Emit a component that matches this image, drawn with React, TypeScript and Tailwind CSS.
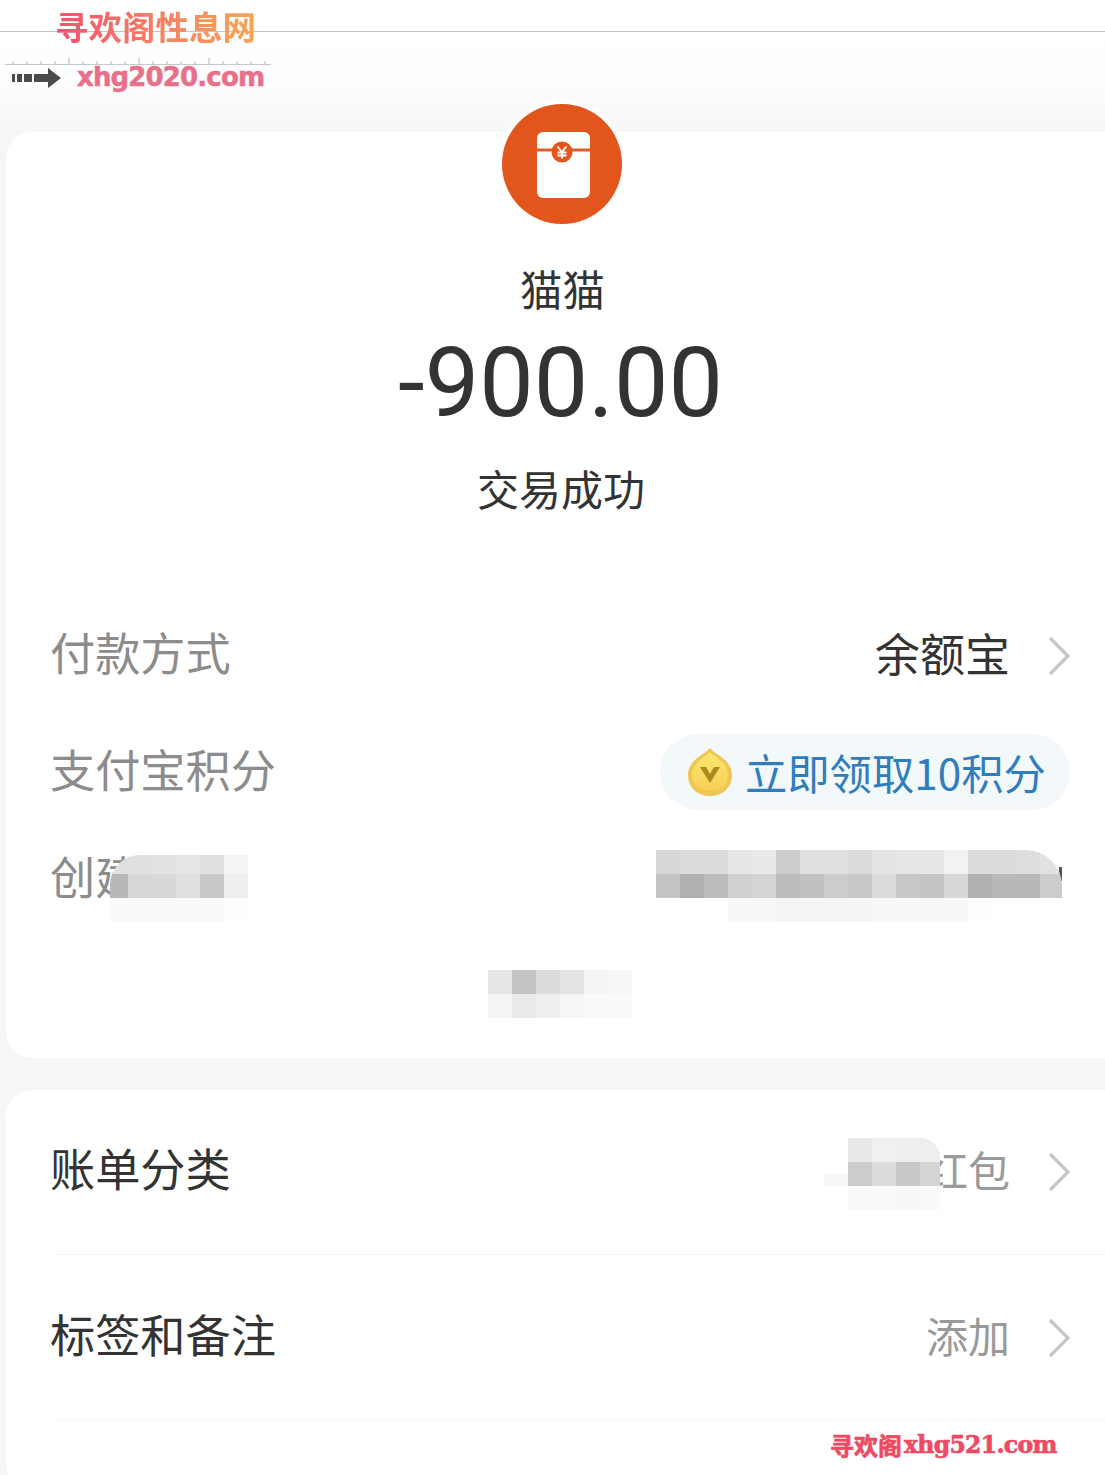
import React from "react";

const cjk = "font-['Noto_Sans_CJK_SC','Noto_Sans',sans-serif]";

function Chevron({ className = "" }: { className?: string }) {
  return (
    <svg width="24" height="42" viewBox="0 0 24 42" className={"shrink-0 " + className} fill="none">
      <path d="M3 3 L21 21 L3 39" stroke="#c6c6c6" strokeWidth="3.2" />
    </svg>
  );
}

function Mosaic({ rows, className }: { rows: string[][]; className: string }) {
  return (
    <div className={"absolute flex flex-col overflow-hidden " + className}>
      {rows.map((r, i) => (
        <div key={i} className="flex h-6 shrink-0">
          {r.map((c, j) => (
            <div key={j} className="h-6 w-6 shrink-0" style={{ backgroundColor: c }} />
          ))}
        </div>
      ))}
    </div>
  );
}

function Packet() {
  return (
    <svg width="120" height="120" viewBox="0 0 120 120" className="block">
      <circle cx="60" cy="60" r="60" fill="#e2551c" />
      <rect x="35" y="28" width="53" height="66" rx="6" fill="#fff" />
      <path d="M35 46 H88" stroke="#d9602c" strokeWidth="3" />
      <circle cx="60" cy="48" r="10.5" fill="#e2551c" />
      <path d="M55.5 42.5 L60 48 L64.5 42.5 M60 48 V54.5 M55.5 48.5 H64.5 M55.5 51.5 H64.5" stroke="#fff" strokeWidth="1.9" fill="none" />
    </svg>
  );
}

function Coin() {
  return (
    <svg width="46" height="50" viewBox="0 0 46 50" className="shrink-0">
      <defs>
        <linearGradient id="coin" x1="0" y1="0" x2="0" y2="1">
          <stop offset="0" stopColor="#fbe86f" />
          <stop offset="1" stopColor="#f8cf55" />
        </linearGradient>
      </defs>
      <path d="M23 1 C27 7 45 12 45 28 C45 41 35 49 23 49 C11 49 1 41 1 28 C1 12 19 7 23 1 Z" fill="#efc653" />
      <path d="M23 5 C27 10 41 15 41 28 C41 38 33 44 23 44 C13 44 5 38 5 28 C5 15 19 10 23 5 Z" fill="url(#coin)" />
      <path d="M13 20 L23 36 L33 20 L27 20 L23 27 L19 20 Z" fill="#a98a1e" />
    </svg>
  );
}

function Ruler() {
  const ticks = Array.from({ length: 19 }, (_, i) => i);
  return (
    <svg width="266" height="8" viewBox="0 0 266 8" className="block">
      <path d="M0 7.5 H266" stroke="#c9c9c9" strokeWidth="1" />
      {ticks.map((i) => (
        <path key={i} d={`M${8 + i * 14} ${i % 5 === 4 ? 1 : 4} V7`} stroke="#b5b5b5" strokeWidth="1" />
      ))}
    </svg>
  );
}

function Arrow() {
  return (
    <svg width="50" height="22" viewBox="0 0 50 22" className="block">
      <path d="M0 7 H3 V15 H0 Z M5 7 H10 V15 H5 Z M12 7 H20 V15 H12 Z M22 7 H36 V1 L49 11 L36 21 V15 H22 Z" fill="#4a4a4a" />
    </svg>
  );
}

function Row({
  label,
  value,
  className,
  labelShift,
  valueShift,
  chevronShift,
}: {
  label: string;
  value: string;
  className: string;
  labelShift: string;
  valueShift: string;
  chevronShift: string;
}) {
  return (
    <div className={"flex items-center justify-between pl-[44px] pr-[65px] " + className}>
      <span className={"text-[45.2px] leading-none text-[#333] " + labelShift}>{label}</span>
      <div className="flex items-center gap-[37px]">
        <span className={"text-[42px] leading-none text-[#9a9a9a] " + valueShift}>{value}</span>
        <Chevron className={chevronShift} />
      </div>
    </div>
  );
}

export default function App() {
  return (
    <div className={"relative h-[1475px] w-[1105px] overflow-hidden bg-[#f6f6f6] " + cjk}>
      <div className="h-[32px] border-b border-[#c4c4c4] bg-white" />
      <div className="h-[100px] bg-gradient-to-b from-white via-[#fdfdfd] to-[#f7f7f7]" />

      <main className="ml-[6px] w-[1130px]">
        {/* summary card */}
        <section className="relative flex h-[926px] flex-col rounded-[26px] bg-white">
          <div className="-mt-[28px] ml-[496px] w-[120px] rounded-full ring-4 ring-white/70">
            <Packet />
          </div>
          <div className="mt-[40px] ml-[514px] text-[42.5px] leading-[48px] text-[#333]">猫猫</div>
          <div className="mt-[13px] ml-[392px] font-['Roboto',sans-serif] text-[97px] leading-[116px] text-[#333]">-900.00</div>
          <div className="mt-[23px] ml-[471px] text-[42px] leading-[48px] text-[#333]">交易成功</div>

          <div className="mt-[110px]">
            <div className="flex h-[60px] items-center justify-between pl-[44px] pr-[65px]">
              <span className="text-[45.2px] leading-none text-[#8c8c8c]">付款方式</span>
              <div className="flex items-center gap-[37px]">
                <span className="text-[45px] leading-none text-[#333]">余额宝</span>
                <Chevron className="mt-[8px]" />
              </div>
            </div>
            <div className="mt-[52px] flex h-[76px] items-center justify-between pl-[44px] pr-[66px]">
              <span className="-mt-[6px] text-[45.2px] leading-none text-[#8c8c8c]">支付宝积分</span>
              <div className="flex h-[76px] w-[410px] items-center rounded-full bg-[#f3f8fb] pl-[27px]">
                <Coin />
                <span className="ml-[12px] text-[42.3px] leading-none whitespace-nowrap text-[#2f7dbd]">立即领取10积分</span>
              </div>
            </div>
            <div className="mt-[36px] flex h-[60px] items-center pl-[44px]">
              <span className="text-[45.2px] leading-none text-[#8c8c8c]">创建</span>
            </div>
          </div>

          {/* privacy mosaics laid over the row values */}
          <Mosaic
            className="left-[104px] top-[723px] h-[67px] w-[138px] rounded-tl-[30px] [&>*]:-ml-[6px] [&>*:first-child]:-mt-[5px]"
            rows={[
              ["#e0e0e0", "#e0e0e0", "#e2e2e2", "#e6e6e6", "#dfdfdf", "#f5f5f5"],
              ["#b8b8b8", "#d8d8d8", "#d8d8d8", "#e0e0e0", "#c8c8c8", "#eeeeee"],
              ["#fafafa", "#fafafa", "#fafafa", "#fafafa", "#fafafa", "#fdfdfd"],
            ]}
          />
          <div className="absolute left-[1053px] top-[735px] h-[14px] w-[3px] bg-[#555]" />
          <Mosaic
            className="left-[650px] top-[718px] h-[72px] w-[406px] rounded-tr-[36px]"
            rows={[
              ["#d8d8d8", "#dcdcdc", "#dcdcdc", "#e6e6e6", "#e9e9e9", "#cccccc", "#e0e0e0", "#e0e0e0", "#dcdcdc", "#e4e4e4", "#e6e6e6", "#e6e6e6", "#f2f2f2", "#dcdcdc", "#dcdcdc", "#dedede", "#e2e2e2"],
              ["#c4c4c4", "#b0b0b0", "#bcbcbc", "#d0d0d0", "#d4d4d4", "#bcbcbc", "#c0c0c0", "#cccccc", "#c8c8c8", "#dcdcdc", "#c8c8c8", "#c4c4c4", "#d8d8d8", "#b0b0b0", "#b8b8b8", "#b8b8b8", "#cccccc"],
              ["#ffffff", "#ffffff", "#ffffff", "#f8f8f8", "#f8f8f8", "#f5f5f5", "#f5f5f5", "#f5f5f5", "#f5f5f5", "#f8f8f8", "#f8f8f8", "#f8f8f8", "#f8f8f8", "#fdfdfd", "#ffffff", "#ffffff", "#ffffff"],
            ]}
          />
          <Mosaic
            className="left-[482px] top-[838px] h-[48px] w-[144px]"
            rows={[
              ["#e6e6e6", "#c4c4c4", "#dcdcdc", "#e4e4e4", "#f4f4f4", "#f6f6f6"],
              ["#f4f4f4", "#eaeaea", "#eeeeee", "#f6f6f6", "#fafafa", "#fafafa"],
            ]}
          />
        </section>

        {/* bill details card */}
        <section className="relative mt-[32px] h-[400px] rounded-[26px] bg-white">
          <Row className="h-[160px]" label="账单分类" value="红包" labelShift="-mt-[4px]" valueShift="-mt-[2px]" chevronShift="mt-[4px]" />
          <div className="ml-[49px] mt-[4px] h-px bg-[#f6f6f6]" />
          <Row className="h-[165px]" label="标签和备注" value="添加" labelShift="-mt-[8px]" valueShift="-mt-[6px]" chevronShift="" />
          <div className="ml-[49px] h-px bg-[#f6f6f6]" />

          <div className="absolute left-[818px] top-[84px] h-[12px] w-[24px] bg-[#f7f7f7]" />
          <Mosaic
            className="left-[842px] top-[48px] h-[72px] w-[92px] rounded-tr-[20px]"
            rows={[
              ["#e8e8e8", "#f0f0f0", "#eeeeee", "#eeeeee"],
              ["#cccccc", "#dcdcdc", "#c8c8c8", "#d4d4d4"],
              ["#fafafa", "#fafafa", "#f8f8f8", "#fafafa"],
            ]}
          />
        </section>
      </main>

      {/* site watermarks */}
      <div className="absolute left-[55px] top-[4px] bg-gradient-to-r from-[#f2506e] to-[#f8a552] bg-clip-text text-[33.5px] leading-[44px] font-bold whitespace-nowrap text-transparent">
        寻欢阁性息网
      </div>
      <div className="absolute left-[5px] top-[57px]">
        <Ruler />
      </div>
      <div className="absolute left-[12px] top-[67px]">
        <Arrow />
      </div>
      <div className="absolute left-[77px] top-[60px] font-['DejaVu_Sans',sans-serif] text-[26px] leading-[34px] font-bold tracking-[-0.85px] whitespace-nowrap text-[#e8708a] [-webkit-text-stroke:0.5px_#e8708a]">
        xhg2020.com
      </div>
      <div className="absolute left-[830px] top-[1430px] flex items-center font-bold whitespace-nowrap text-[#ef4a63] [-webkit-text-stroke:0.7px_#ef4a63]">
        <span className="text-[24px] leading-[30px]">寻欢阁</span>
        <span className="ml-[2px] font-['DejaVu_Serif',serif] text-[23.5px] leading-[30px] tracking-[-0.7px]">xhg521.com</span>
      </div>
    </div>
  );
}
